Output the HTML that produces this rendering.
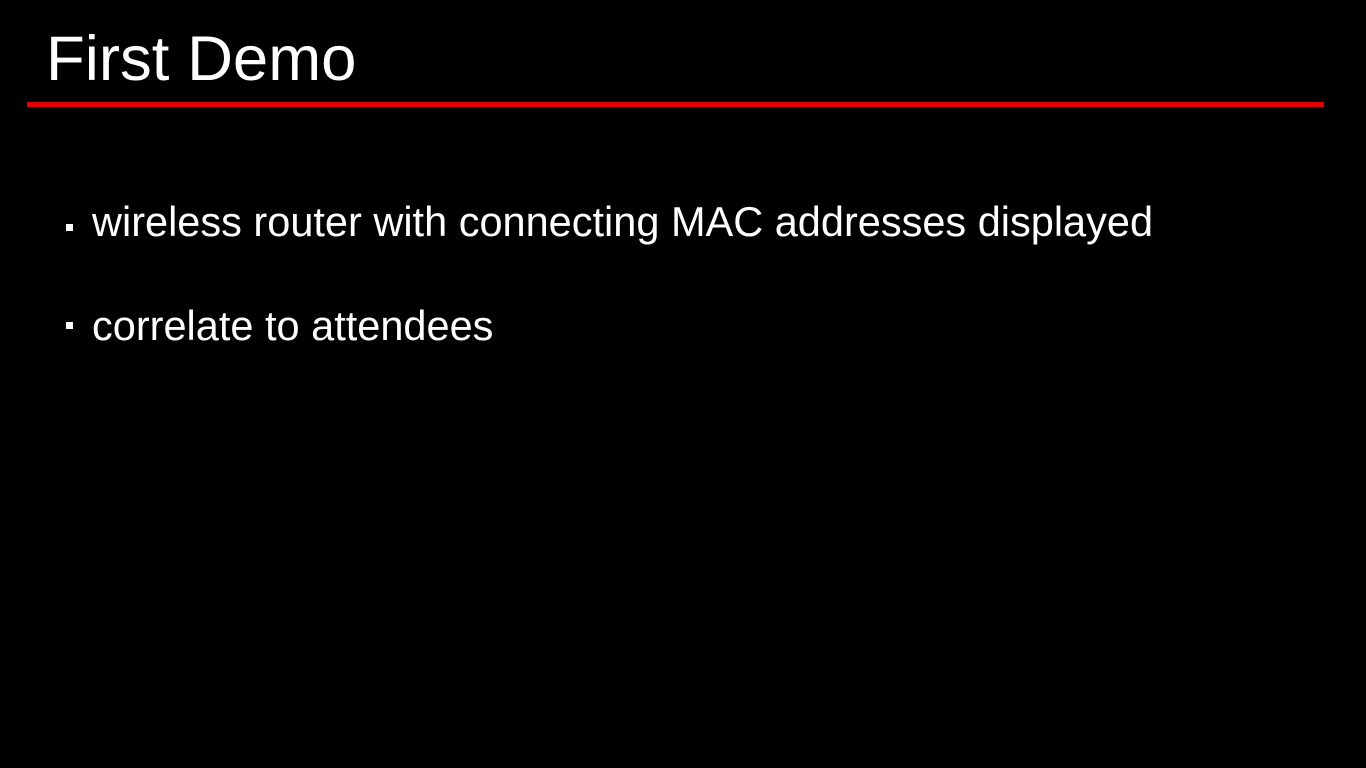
<!DOCTYPE html>
<html><head><style>
body{margin:0;width:1366px;height:768px;background:#000;overflow:hidden;font-family:"Liberation Sans",sans-serif;color:#fff;position:relative}
.t{position:absolute;left:46px;top:23px;font-size:63.5px;line-height:72px}
.bar{position:absolute;left:27px;top:102px;width:1297px;height:5px;background:#e00000}
.b{position:absolute;left:92px;font-size:41.5px;line-height:46px}
.d{position:absolute;left:66px;width:7px;height:7px;background:#fff}
</style></head><body>
<div class="t">First Demo</div>
<div class="bar"></div>
<div class="d" style="top:224px"></div>
<div class="b" style="top:199px">wireless router with connecting MAC addresses displayed</div>
<div class="d" style="top:322px"></div>
<div class="b" style="top:303px">correlate to attendees</div>
</body></html>
